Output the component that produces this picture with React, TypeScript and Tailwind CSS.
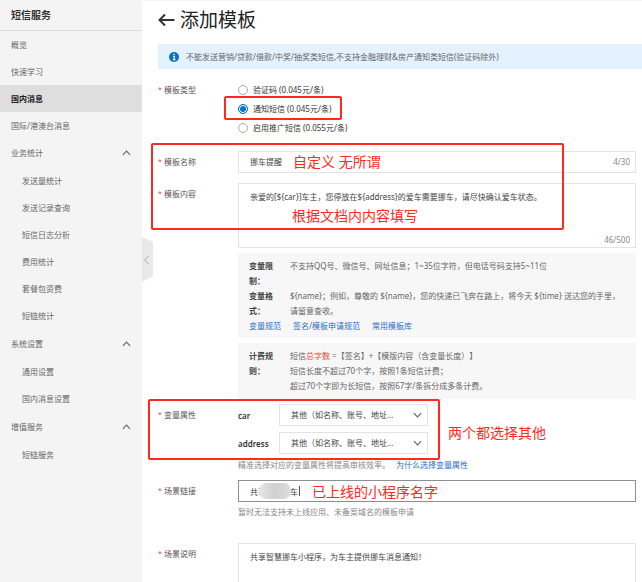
import { useState } from 'react';
import type { ReactNode } from 'react';

interface MenuItem {
  label: string;
  active?: boolean;
  children?: string[];
}

const MENU: MenuItem[] = [
  { label: '概览' },
  { label: '快速学习' },
  { label: '国内消息', active: true },
  { label: '国际/港澳台消息' },
  {
    label: '业务统计',
    children: ['发送量统计', '发送记录查询', '短信日志分析', '费用统计', '套餐包资费', '短链统计'],
  },
  { label: '系统设置', children: ['通用设置', '国内消息设置'] },
  { label: '增值服务', children: ['短链服务'] },
];

const TYPES = [
  { value: 'code', label: '验证码 (0.045元/条)' },
  { value: 'notice', label: '通知短信 (0.045元/条)' },
  { value: 'promo', label: '启用推广短信 (0.055元/条)' },
];

const VARIABLES = ['car', 'address'];

function Chevron({ className }: { className: string }) {
  return (
    <svg viewBox="0 0 10 6" className={className} fill="none" stroke="currentColor" strokeWidth="1.3">
      <path d="M1 5 5 1l4 4" />
    </svg>
  );
}

function Sidebar() {
  return (
    <aside className="relative w-[142px] shrink-0 bg-[#f4f4f4] text-[#666]">
      <h2 className="flex h-[30px] items-center border-b border-[#dedede] px-[11px] text-[10px] font-bold text-[#333]">
        短信服务
      </h2>
      <ul>
        {MENU.map((item) => (
          <li key={item.label}>
            <a
              href="#"
              className={`flex h-[27px] items-center justify-between px-[11px] ${
                item.active ? 'bg-[#dedede] font-bold text-[#222]' : ''
              }`}
            >
              {item.label}
              {item.children && <Chevron className="h-[6px] w-[9px]" />}
            </a>
            {item.children && (
              <ul className="py-px">
                {item.children.map((child) => (
                  <li key={child}>
                    <a href="#" className="flex h-[27px] items-center pl-[22px]">
                      {child}
                    </a>
                  </li>
                ))}
              </ul>
            )}
          </li>
        ))}
      </ul>
      <button type="button" aria-label="收起菜单" className="absolute top-[236px] left-full">
        <svg viewBox="0 0 11 45" className="h-[45px] w-[11px]">
          <path d="M0 0 11 5v34L0 45z" fill="#e9e9e9" />
          <path d="M6.500 19 2.500 23l4 4" fill="none" stroke="#aaa" />
        </svg>
      </button>
    </aside>
  );
}

function Required() {
  return <span className="w-[6px] text-[7px] text-[#e5493a]">*</span>;
}

interface FieldProps {
  label: string;
  htmlFor?: string;
  className?: string;
  children: ReactNode;
}

function Field({ label, htmlFor, className = '', children }: FieldProps) {
  return (
    <div className={`flex pr-[6px] ${className}`}>
      <label htmlFor={htmlFor} className="flex h-[20px] w-[80px] shrink-0 items-center text-[#555]">
        <Required />
        {label}
      </label>
      <div className="min-w-0 flex-1">{children}</div>
    </div>
  );
}

function Rule({ title, children }: { title: string; children: ReactNode }) {
  return (
    <div className="flex">
      <dt className="w-[41px] shrink-0 pr-[14px] font-bold text-[#444]">{title}</dt>
      <dd className="min-w-0 flex-1">{children}</dd>
    </div>
  );
}

function Mark({ className }: { className: string }) {
  return <div className={`pointer-events-none absolute rounded-[2px] border-2 border-[#ff2a1c] ${className}`} />;
}

function Note({ className, children }: { className: string; children: ReactNode }) {
  return (
    <p className={`pointer-events-none absolute text-[14px] leading-[20px] whitespace-nowrap text-[#ff2a1c] ${className}`}>
      {children}
    </p>
  );
}

export default function App() {
  const [type, setType] = useState('notice');
  const [name, setName] = useState('挪车提醒');
  const [content, setContent] = useState(
    '亲爱的[${car}]车主，您停放在${address}的爱车需要挪车，请尽快确认爱车状态。',
  );
  const [link, setLink] = useState('共享智慧挪车');
  const [remark, setRemark] = useState('共享智慧挪车小程序，为车主提供挪车消息通知！');

  return (
    <div className="flex h-screen flex-col overflow-hidden bg-white font-['Noto_Sans','Noto_Sans_CJK_SC',sans-serif] text-[8px] leading-[15px] text-[#666] [text-spacing-trim:space-all]">
      <div className="h-px shrink-0 bg-[#f4f4f4]" />
      <div className="flex min-h-0 flex-1">
        <Sidebar />
        <main className="relative min-w-0 flex-1 overflow-hidden pl-[16px]">
          <header className="flex h-[43px] items-center gap-[5px] pb-[6px]">
            <a href="#" aria-label="返回">
              <svg viewBox="0 0 17 14" className="h-[14px] w-[17px]" fill="none" stroke="#333" strokeWidth="2">
                <path d="M16.500 7H1.500M7 1.500 1.500 7l5.500 5.500" />
              </svg>
            </a>
            <h1 className="text-[19px] leading-[24px] text-[#222]">添加模板</h1>
          </header>

          <div className="flex h-[25px] items-center gap-[7px] bg-[#e3f2fe] pl-[11px]">
            <svg viewBox="0 0 10 10" className="h-[10px] w-[10px]">
              <circle cx="5" cy="5" r="5" fill="#0a70cc" />
              <path d="M5.100 1.700v1.400M4 4.300h1.300v3.200M3.900 7.700h2.500" stroke="#fff" strokeWidth="1.200" fill="none" />
            </svg>
            <p>不能发送营销/贷款/借款/中奖/抽奖类短信,不支持金融理财&amp;房产通知类短信(验证码除外)</p>
          </div>

          <form>
            <fieldset className="mt-[11px] flex">
              <legend className="float-left flex h-[19px] w-[80px] items-center text-[#555]">
                <Required />
                模板类型
              </legend>
              <div>
                {TYPES.map((t) => (
                  <label key={t.value} className="flex h-[19px] items-center gap-[5px] text-[#333]">
                    <input
                      type="radio"
                      name="type"
                      checked={type === t.value}
                      onChange={() => setType(t.value)}
                      className="size-[10px] appearance-none rounded-full border border-[#aaa] bg-white checked:border-[#0a70cc] checked:bg-[#0a70cc] checked:shadow-[inset_0_0_0_1px_#fff]"
                    />
                    {t.label}
                  </label>
                ))}
              </div>
            </fieldset>

            <Field label="模板名称" htmlFor="name" className="mt-[14px]">
              <div className="flex h-[22px] items-center border border-[#e3e3e3] pr-[5px] pb-px pl-[11px]">
                <input
                  id="name"
                  value={name}
                  onChange={(e) => setName(e.target.value)}
                  className="min-w-0 flex-1 text-[#444] outline-none"
                />
                <span className="text-[#888]">{name.length}/30</span>
              </div>
            </Field>

            <Field label="模板内容" htmlFor="content" className="mt-[10px]">
              <div className="border border-[#e3e3e3] pr-[5px] pl-[11px]">
                <textarea
                  id="content"
                  value={content}
                  onChange={(e) => setContent(e.target.value)}
                  className="mt-[5px] block h-[43px] w-full resize-none text-[#444] outline-none"
                />
                <p className="text-right text-[#888]">46/500</p>
              </div>

              <div className="mt-[5px] bg-[#f7f7f7] px-[11px] py-[5px]">
                <dl>
                  <Rule title="变量限制：">
                    不支持QQ号、微信号、网址信息；1~35位字符，但电话号码支持5~11位
                  </Rule>
                  <Rule title="变量格式：">
                    {'${name}；例如，尊敬的 ${name}，您的快递已飞奔在路上，将今天 ${time} 送达您的手里，'}
                    <br />
                    请留意查收。
                  </Rule>
                </dl>
                <div className="flex gap-[12px] text-[#2b6cc8]">
                  <a href="#">变量规范</a>
                  <a href="#">签名/模板申请规范</a>
                  <a href="#">常用模板库</a>
                </div>
              </div>

              <dl className="mt-[5px] bg-[#f7f7f7] px-[11px] pt-[5px] pb-[6px]">
                <Rule title="计费规则：">
                  短信<span className="text-[#e5493a]">总字数</span> =【签名】+【模版内容（含变量长度）】
                  <br />
                  短信长度不超过70个字，按照1条短信计费；
                  <br />
                  超过70个字即为长短信，按照67字/条拆分成多条计费。
                </Rule>
              </dl>
            </Field>

            <Field label="变量属性" htmlFor="var-car" className="mt-[5px]">
              <div className="flex flex-col gap-[6px]">
                {VARIABLES.map((v) => (
                  <div key={v} className="flex items-center">
                    <label htmlFor={`var-${v}`} className="w-[41px] font-semibold text-[#333]">
                      {v}
                    </label>
                    <div className="relative w-[149px]">
                      <select
                        id={`var-${v}`}
                        className="block h-[22px] w-full appearance-none border border-[#e3e3e3] bg-white pr-[20px] pb-px pl-[11px] text-[#444]"
                      >
                        <option>其他（如名称、账号、地址...</option>
                      </select>
                      <Chevron className="pointer-events-none absolute top-[8px] right-[6px] h-[6px] w-[9px] rotate-180" />
                    </div>
                  </div>
                ))}
              </div>
              <p className="mt-[3px] text-[#888]">
                精准选择对应的变量属性将提高审核效率。
                <a href="#" className="ml-[6px] text-[#2b6cc8]">
                  为什么选择变量属性
                </a>
              </p>
            </Field>

            <Field label="场景链接" htmlFor="link" className="mt-[8px]">
              <div className="relative">
                <input
                  id="link"
                  value={link}
                  onChange={(e) => setLink(e.target.value)}
                  className="block h-[22px] w-full border border-[#8f8f8f] px-[11px] text-[#444] outline-none"
                />
                <span className="absolute top-[3px] left-[21px] h-[16px] w-[32px] rounded-[7px] bg-linear-to-r from-[#e6e6e6] via-[#d0d0d0] to-[#dedede]" />
                <span className="absolute top-[6px] left-[61px] h-[10px] w-px bg-[#555]" />
              </div>
              <p className="mt-[2px] text-[#888]">暂时无法支持未上线应用、未备案域名的模板申请</p>
            </Field>

            <Field label="场景说明" htmlFor="remark" className="mt-[24px]">
              <textarea
                id="remark"
                value={remark}
                onChange={(e) => setRemark(e.target.value)}
                className="block h-[65px] w-full resize-none border border-[#e3e3e3] px-[11px] pt-[5px] text-[#444] outline-none"
              />
            </Field>
          </form>

          <Mark className="top-[95px] left-[82px] h-[24px] w-[118px]" />
          <Mark className="top-[142px] left-[9px] h-[87px] w-[413px]" />
          <Mark className="top-[398px] left-[6px] h-[61px] w-[292px]" />
          <Note className="top-[151px] left-[151px]">自定义 无所谓</Note>
          <Note className="top-[205px] left-[150px]">根据文档内内容填写</Note>
          <Note className="top-[422px] left-[306px]">两个都选择其他</Note>
          <Note className="top-[481px] left-[170px]">已上线的小程序名字</Note>
        </main>
      </div>
    </div>
  );
}
